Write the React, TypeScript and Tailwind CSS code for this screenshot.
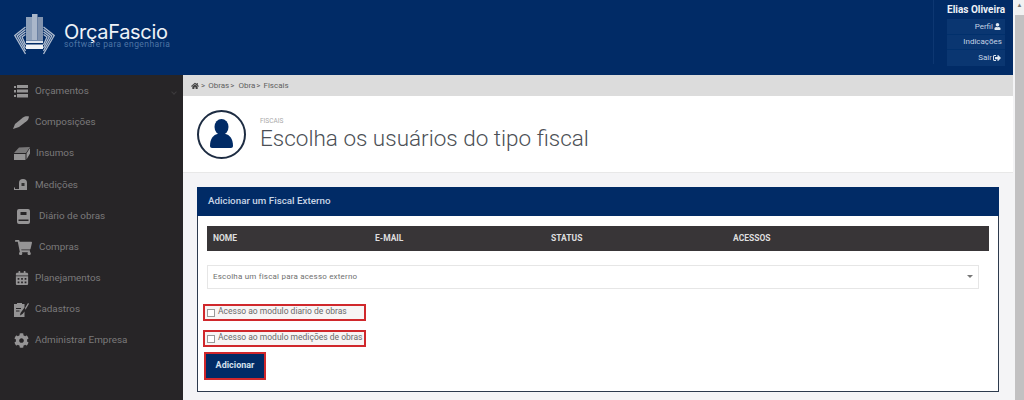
import React from "react";
import { FaHome, FaUser, FaSignOutAlt, FaShoppingCart, FaCalendarAlt, FaCog } from "react-icons/fa";

function Logo() {
  return (
    <svg width="42" height="41" viewBox="0 0 42 41" className="shrink-0">
      <path d="M12 3h6v23h-6z" fill="#8ea0b9" />
      <path d="M18 0h5.500v26H18z" fill="#aab7ca" />
      <path d="M23.500 3H29v23h-5.500z" fill="#8193ae" />
      <path d="M12 26.500h17v2.500H12z" fill="#dfe5ee" />
      <path d="M12 30.500h17v4.500H12z" fill="#f0f3f7" />
      <g fill="none" stroke="#aebbce" strokeWidth="1.300">
        <path d="M11.500 13 .800 21.500 11.500 40" />
        <path d="M11.500 15.500 3.200 22 11.500 37" />
        <path d="M11.500 18 5.600 22.500 11.500 34" />
        <path d="M11.500 20.500 8 23l3.500 8" />
        <path d="M29.500 13l10.700 8.500L29.500 40" />
        <path d="M29.500 15.500l8.300 6.500-8.300 15" />
        <path d="M29.500 18l5.900 4.500-5.900 11.500" />
        <path d="M29.500 20.500 33 23l-3.500 8" />
      </g>
    </svg>
  );
}

const ListIcon = () => (
  <svg width="14" height="13" viewBox="0 0 14 13" fill="currentColor">
    <path d="M0 1h2v2H0zM0 5h2v2.500H0zM0 10h2v2H0zM3 0h11v3H3zM3 4.500h11v3H3zM3 9h11v3.500H3z" />
  </svg>
);
const PencilIcon = () => (
  <svg width="16" height="13" viewBox="0 0 16 13" fill="currentColor">
    <path d="M0 13l2-5L10 1.500C11.500.300 14 0 16 .500c-.300 2-1 3.500-2.500 4.700L6 11z" />
  </svg>
);
const BlockIcon = () => (
  <svg width="16" height="13" viewBox="0 0 16 13" fill="currentColor">
    <path d="M0 6 5 .500 16 0l-4 6H1z" opacity=".75" />
    <path d="M0 7h11.500v6H0zM12.500 6.500 16 1v5.500L12.500 12.500z" />
  </svg>
);
const TapeIcon = () => (
  <svg width="14" height="12" viewBox="0 0 14 12">
    <path d="M5 4a4 4 0 0 1 8 0v7H5z" fill="currentColor" />
    <rect x="7.500" y="4" width="3" height="3" fill="#333" />
    <path d="M0 10h6v1H0zM0 8.500h1V11H0z" fill="currentColor" />
  </svg>
);
const JournalIcon = () => (
  <svg width="13" height="15" viewBox="0 0 13 15" fill="currentColor">
    <path d="M2 0h9a2 2 0 0 1 2 2v11a2 2 0 0 1-2 2H2a2 2 0 0 1-2-2V2a2 2 0 0 1 2-2zM3.500 3v3h6V3zM1.500 10.500v1.500h10v-1.500z" fillRule="evenodd" />
  </svg>
);
const ClipIcon = () => (
  <svg width="15" height="15" viewBox="0 0 15 15" fill="currentColor">
    <path d="M0 2h3V1h5v1h2.500v3.500L6.500 11l-.500 2.500L8.500 12l2-2.500V15H0zM2 6h5v1H2zM2 8.500h3.500v1H2z" fillRule="evenodd" />
    <path d="M11 6 14 1l1 .700-3.500 6z" />
  </svg>
);

const menu: { label: string; icon: React.ReactNode; iconBox: string }[] = [
  { label: "Orçamentos", icon: <ListIcon />, iconBox: "w-[21px]" },
  { label: "Composições", icon: <PencilIcon />, iconBox: "w-[22px] -ml-[1px] pr-[1px]" },
  { label: "Insumos", icon: <BlockIcon />, iconBox: "w-[22px]" },
  { label: "Medições", icon: <TapeIcon />, iconBox: "w-[21px]" },
  { label: "Diário de obras", icon: <JournalIcon />, iconBox: "w-[25px] pl-[3px]" },
  { label: "Compras", icon: <FaShoppingCart size={17} />, iconBox: "w-[25px] pl-[1px]" },
  { label: "Planejamentos", icon: <FaCalendarAlt size={14} />, iconBox: "w-[21px] pl-[1px]" },
  { label: "Cadastros", icon: <ClipIcon />, iconBox: "w-[21px]" },
  { label: "Administrar Empresa", icon: <FaCog size={15} />, iconBox: "w-[21px]" },
];

function Check({ label }: { label: string }) {
  return (
    <div className="flex h-[17px] w-[163px] items-center border-2 border-[#d0282c] bg-[#f7f5f5] pl-[2px]">
      <span className="mt-[1px] h-[8px] w-[8px] shrink-0 border border-[#9a9a9a] bg-white" />
      <span className="-mt-[3px] ml-[3px] text-[8.500px] whitespace-nowrap text-[#6a6a6a]">{label}</span>
    </div>
  );
}

export default function App() {
  return (
    <div className="flex h-[400px] w-[1024px] overflow-hidden bg-[#f4f4f6] font-['Roboto',sans-serif]">
      <div className="flex w-[1013px] shrink-0 flex-col">
        <header className="flex h-[75px] shrink-0 bg-[#012b66]">
          <div className="flex items-center pb-[7px] pl-[14px]">
            <Logo />
            <div className="mt-[2px] ml-[8px] flex flex-col">
              <span className="font-['Inter',sans-serif] text-[20px] leading-[18px] font-normal tracking-[-0.3px] text-[#eef2f7]">OrçaFascio</span>
              <span className="text-[8.500px] leading-[7px] tracking-[0.42px] text-[#4d75a5]">software para engenharia</span>
            </div>
          </div>
          <div className="ml-auto flex h-[64px] w-[80px] flex-col items-end border-l border-[#0d3772] pr-[8px]">
            <span className="mt-[4px] text-[10px] leading-[12px] font-bold whitespace-nowrap text-[#eef2f7]">Elias Oliveira</span>
            <div className="mt-[3px] flex w-[58px] flex-col bg-[#0a3671] text-[8px] text-[#c4d2e4]">
              <span className="flex h-[16px] items-center justify-end gap-[1px] border-b border-[#01306c] pr-[4px]">Perfil <FaUser size={7} className="text-[#dfe7f1]" /></span>
              <span className="flex h-[15px] items-center justify-end border-b border-[#01306c] pr-[3px]">Indicações</span>
              <span className="flex h-[16px] items-center justify-end gap-[1px] pr-[4px]">Sair <FaSignOutAlt size={8} className="text-[#dfe7f1]" /></span>
            </div>
          </div>
        </header>
        <div className="flex min-h-0 flex-1">
          <aside className="flex w-[183px] shrink-0 flex-col bg-[#272527] pt-[1px] text-[#7b7a7b]">
            {menu.map((m, i) => (
              <div key={m.label} className="flex h-[31.125px] items-center pr-[7px] pl-[14px] text-[9.900px]">
                <span className={`flex shrink-0 items-center text-[#959495] ${m.iconBox}`}>{m.icon}</span>
                <span className="whitespace-nowrap">{m.label}</span>
                {i === 0 && <span className="ml-auto h-[4px] w-[4px] rotate-45 border-r border-b border-[#3d3b3d]" />}
              </div>
            ))}
          </aside>
          <main className="flex min-w-0 flex-1 flex-col">
            <div className="flex h-[21px] shrink-0 items-center bg-[#dcdcdc] pl-[8px] text-[8px] text-[#5f5f5f]">
              <FaHome size={8} className="text-[#444]" />
              <span className="ml-[2px]">&gt;</span>
              <span className="ml-[3px]">Obras</span>
              <span className="ml-[1px]">&gt;</span>
              <span className="ml-[4px]">Obra</span>
              <span className="ml-[1px]">&gt;</span>
              <span className="ml-[3px]">Fiscais</span>
            </div>
            <div className="flex h-[77px] shrink-0 items-center border-b border-[#e8e8e8] bg-white pl-[14px]">
              <div className="flex h-[49px] w-[49px] shrink-0 items-end justify-center overflow-hidden rounded-full border-[2px] border-[#1d2c42]">
                <svg width="23" height="29" viewBox="0 0 23 29" className="mb-[9px]">
                  <ellipse cx="11.500" cy="8" rx="7" ry="8" fill="#012b66" />
                  <path d="M0 27c0-7 3-11 7.500-12h8c4.500 1 7.500 5 7.500 12 0 1-1 2-2 2H2c-1 0-2-1-2-2z" fill="#012b66" />
                </svg>
              </div>
              <div className="ml-[14px] flex flex-col">
                <span className="text-[6.500px] leading-[8px] text-[#a9a9a9]">FISCAIS</span>
                <span className="text-[22.500px] leading-[26px] font-light whitespace-nowrap text-[#4b4f55]">Escolha os usuários do tipo fiscal</span>
              </div>
            </div>
            <div className="px-[14px] pt-[14px]">
              <section className="h-[205px] border border-t-0 border-[#2d3a4d] bg-white">
                <div className="-mx-[1px] flex h-[29px] items-center bg-[#012b66] pl-[11px] text-[9.800px] font-medium text-[#c9d6e6]">Adicionar um Fiscal Externo</div>
                <div className="px-[9px] pt-[10px]">
                  <div className="flex h-[25px] items-center bg-[#383537] pl-[6px] text-[8.500px] font-bold text-[#dedede]">
                    <span className="w-[162px]">NOME</span>
                    <span className="w-[176px]">E-MAIL</span>
                    <span className="w-[182px]">STATUS</span>
                    <span>ACESSOS</span>
                  </div>
                  <div className="relative mt-[14px] mr-[10px] flex h-[24px] items-center border border-[#e6e6e6] pl-[5px] text-[8px] tracking-[0.2px] text-[#6f6f6f]">
                    Escolha um fiscal para acesso externo
                    <span className="absolute top-[9px] right-[5px] h-0 w-0 border-x-[3px] border-t-[3px] border-x-transparent border-t-[#777]" />
                  </div>
                </div>
                <div className="pt-[15px] pl-[5px]">
                  <Check label="Acesso ao modulo diario de obras" />
                  <div className="h-[9px]" />
                  <Check label="Acesso ao modulo medições de obras" />
                  <div className="mt-[5px] ml-[1px] w-fit border-2 border-[#d0282c]">
                    <button className="flex h-[24px] w-[58px] items-center justify-center bg-[#012b66] text-[9px] font-bold text-[#d5e0ed]">Adicionar</button>
                  </div>
                </div>
              </section>
            </div>
          </main>
        </div>
      </div>
      <div className="ml-auto flex w-[9px] flex-col bg-[#f1f1f1]">
        <div className="h-[15px] text-center text-[6px] leading-[10px] text-[#777]">▲</div>
        <div className="flex-1 bg-[#c2c1c2]" />
      </div>
    </div>
  );
}
